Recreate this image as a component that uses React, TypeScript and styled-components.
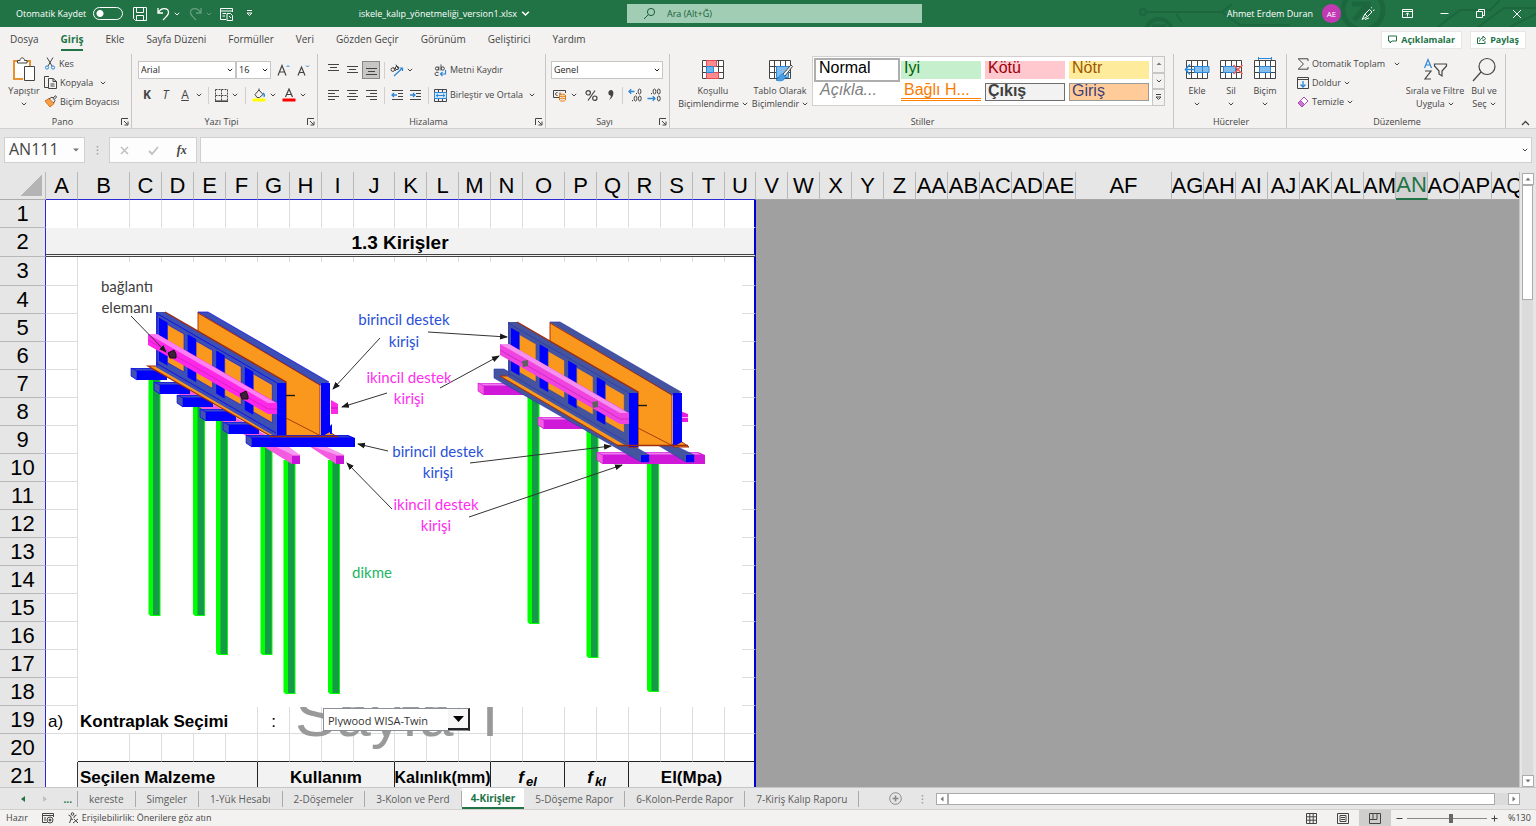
import React from "react";
import styled, { createGlobalStyle, css } from "styled-components";

const GREEN = "#217346";
const INK = "#444444";
const BLUE = "#2b88d8";
const PAGE_EDGE = "#2a2ad4";

const Global = createGlobalStyle`
  *, *::before, *::after { box-sizing: border-box; }
  html, body { margin: 0; padding: 0; }
  body { font-family: "Open Sans", "Noto Sans", sans-serif; font-size: 9px; line-height: 12px; color: ${INK}; }
  button, input, select { font: inherit; color: inherit; margin: 0; padding: 0; border: 0; background: none; border-radius: 0; outline: none; }
  button { display: flex; align-items: center; justify-content: center; white-space: nowrap; }
`;

const Shell = styled.div`
  display: flex;
  flex-direction: column;
  height: 100vh;
  overflow: hidden;
  background: #e6e6e6;
`;

const Icon = styled.svg.attrs((p) => ({ fill: "none", stroke: p.stroke ?? "currentColor" }))`
  display: block;
  flex: none;
`;

const Chevron = ({ size = 6 }: { size?: number }) => (
  <Icon width={size} height={size} viewBox="0 0 6 6" strokeWidth="1">
    <path d="M0.8 1.8 L3 4 L5.2 1.8" />
  </Icon>
);

/* Title bar */

const TitleBar = styled.header`
  position: relative;
  display: grid;
  grid-template-columns: 627fr 295px 614fr;
  align-items: center;
  height: 27px;
  flex: none;
  background: ${GREEN};
  color: #ffffff;
`;

const Circuit = styled.svg`
  position: absolute;
  right: 0;
  top: 0;
  fill: none;
  stroke: #1c673e;
`;

const QuickAccess = styled.div`
  display: flex;
  align-items: center;
  padding-left: 16px;
`;

const SwitchLabel = styled.label`
  display: flex;
  align-items: center;
  gap: 7px;
  white-space: nowrap;
`;

const Switch = styled.input`
  appearance: none;
  width: 30px;
  height: 13px;
  border: 1px solid #ffffff;
  border-radius: 7px;
  background: radial-gradient(circle at 6px 50%, #ffffff 3px, transparent 4px);
`;

const QuickButtons = styled.div`
  display: flex;
  align-items: center;
  gap: 6px;
  margin-left: 10px;
`;

const Quick = styled.button<{ $dim?: boolean; $ml?: number }>`
  gap: 4px;
  margin-left: ${(p) => p.$ml ?? 0}px;
  opacity: ${(p) => (p.$dim ? 0.3 : 1)};
`;

const FileName = styled.button`
  gap: 4px;
  margin: 0 97px 0 auto;
`;

const SearchBox = styled.label`
  display: flex;
  align-items: center;
  gap: 11px;
  height: 19px;
  padding-left: 16px;
  background: #a0cdb4;
  color: #1b5e38;
`;

const SearchInput = styled.input`
  flex: 1;
  min-width: 0;
  &::placeholder { color: #1b5e38; opacity: 1; }
`;

const Account = styled.div`
  position: relative;
  display: flex;
  align-items: center;
  justify-content: flex-end;
  padding-right: 14px;
  white-space: nowrap;
`;

const Avatar = styled.span`
  display: grid;
  place-items: center;
  width: 19px;
  height: 19px;
  margin: 0 20px 0 9px;
  border-radius: 50%;
  background: #c239b3;
  font-size: 8px;
`;

const WindowButtons = styled.div`
  display: flex;
  align-items: center;
  gap: 27px;
`;

/* Ribbon tabs */

const TabBar = styled.nav`
  display: flex;
  align-items: center;
  height: 25px;
  flex: none;
  padding: 0 10px;
  gap: 22px;
  background: #f3f2f1;
  font-size: 10px;
`;

const RibbonTab = styled.button<{ $active?: boolean }>`
  height: 22px;
  border-bottom: 2px solid transparent;
  ${(p) =>
    p.$active &&
    css`
      border-color: ${GREEN};
      color: ${GREEN};
      font-weight: 700;
    `}
`;

const ShareButtons = styled.div`
  display: flex;
  gap: 8px;
  margin-left: auto;
`;

const ShareButton = styled.button`
  gap: 4px;
  height: 18px;
  padding: 0 6px;
  background: #ffffff;
  border: 1px solid #e8e6e4;
  color: ${GREEN};
  font-size: 9px;
  font-weight: 700;
`;

/* Ribbon */

const Ribbon = styled.section`
  display: flex;
  height: 77px;
  flex: none;
  padding-top: 2px;
  background: #f3f2f1;
  border-bottom: 1px solid #d2d0ce;
`;

const GroupBox = styled.div<{ $w?: number; $pad?: number }>`
  display: flex;
  flex-direction: column;
  ${(p) => (p.$w ? `width: ${p.$w}px; flex: none;` : "flex: 1; min-width: 0;")}
  padding-left: ${(p) => p.$pad ?? 6}px;
  border-right: 1px solid #c8c6c4;
`;

const GroupBody = styled.div`
  display: flex;
  flex: none;
  height: 62px;
`;

const GroupFooter = styled.div<{ $pad: number }>`
  display: flex;
  align-items: center;
  height: 12px;
  margin-left: -${(p) => p.$pad}px;
  padding: 0 2px 0 4px;
`;

const GroupName = styled.span`
  flex: 1;
  text-align: center;
  font-size: 9px;
`;

const Launcher = () => (
  <Icon width="8" height="8" viewBox="0 0 8 8" strokeWidth="1">
    <path d="M0.5 7 V0.5 H7 M3 3 L6.5 6.5 M7 3.5 V7 H3.5" />
  </Icon>
);

type GroupProps = { name: string; w?: number; pad?: number; launcher?: boolean; children: React.ReactNode };

const Group = ({ name, w, pad = 6, launcher, children }: GroupProps) => (
  <GroupBox $w={w} $pad={pad}>
    <GroupBody>{children}</GroupBody>
    <GroupFooter $pad={pad}>
      <GroupName>{name}</GroupName>
      {launcher && <Launcher />}
    </GroupFooter>
  </GroupBox>
);

const Stack = styled.div<{ $gap?: number; $top?: number; $ml?: number }>`
  display: flex;
  flex-direction: column;
  gap: ${(p) => p.$gap ?? 0}px;
  padding-top: ${(p) => p.$top ?? 0}px;
  margin-left: ${(p) => p.$ml ?? 0}px;
`;

const ToolRow = styled.div`
  display: flex;
  align-items: center;
  height: 18px;
`;

const BigButton = styled.button<{ $w: number }>`
  flex-direction: column;
  justify-content: flex-start;
  width: ${(p) => p.$w}px;
  padding-top: 1px;
  line-height: 13px;
`;

const BigIcon = styled.span`
  display: grid;
  place-items: center;
  height: 29px;
`;

const BigLine = styled.span`
  display: flex;
  align-items: center;
  gap: 3px;
  height: 13px;
`;

const SmallButton = styled.button`
  justify-content: flex-start;
  gap: 3px;
  height: 19px;
`;

const SmallText = styled.span<{ $mr?: number }>`
  margin-right: ${(p) => p.$mr ?? 0}px;
`;

const Tool = styled.button<{ $w: number; $on?: boolean }>`
  width: ${(p) => p.$w}px;
  height: 18px;
  ${(p) => p.$on && "background: #c8c6c4; border: 1px solid #8a8886;"}
`;

const Letter = styled.span<{ $style?: string }>`
  font-size: 12px;
  line-height: 12px;
  font-weight: ${(p) => (p.$style === "bold" ? 700 : 400)};
  font-style: ${(p) => (p.$style === "italic" ? "italic" : "normal")};
  text-decoration: ${(p) => (p.$style === "underline" ? "underline" : "none")};
`;

const Rule = styled.span<{ $m?: number }>`
  width: 1px;
  height: 17px;
  margin: 0 ${(p) => p.$m ?? 4}px;
  background: #d2d0ce;
`;

const SelectBox = styled.span<{ $w: number }>`
  display: flex;
  align-items: center;
  width: ${(p) => p.$w}px;
  height: 18px;
  padding-right: 2px;
  border: 1px solid #c8c6c4;
  background: #ffffff;
  color: #252423;
`;

const RibbonSelect = styled.select`
  appearance: none;
  flex: 1;
  min-width: 0;
  height: 16px;
  padding-left: 2px;
`;

const Gallery = styled.div`
  display: flex;
  height: 50px;
  margin: 2px 0 0 1px;
  border: 1px solid #d2d0ce;
  background: #ffffff;
`;

const GalleryGrid = styled.div`
  display: grid;
  grid-template-columns: repeat(4, 80px);
  grid-auto-rows: 18px;
  gap: 4px;
  padding: 4px 3px 3px 4px;
`;

const StyleCell = styled.button<{ $bg?: string; $fg: string; $kind?: string }>`
  align-items: flex-start;
  justify-content: flex-start;
  padding-left: 3px;
  overflow: hidden;
  font-family: "Liberation Sans", Arial, sans-serif;
  font-size: 16px;
  line-height: 14px;
  background: ${(p) => p.$bg ?? "#ffffff"};
  color: ${(p) => p.$fg};
  ${(p) => p.$kind === "selected" && "outline: 2px solid #aeaeae; outline-offset: 1px; padding-left: 2px;"}
  ${(p) => p.$kind === "italic" && "font-style: italic;"}
  ${(p) => p.$kind === "linked" && "border-bottom: 3px double #ff8001;"}
  ${(p) => p.$kind === "output" && "border: 1px solid #6e6e6e; font-weight: 700; padding-left: 2px;"}
  ${(p) => p.$kind === "input" && "border: 1px solid #9a9a9a; padding-left: 2px;"}
`;

const GalleryScroll = styled.div`
  display: grid;
  grid-template-rows: 1fr 1fr 1fr;
  width: 13px;
  margin: -1px -1px -1px 0;
`;

const GalleryStep = styled.button`
  border: 1px solid #c8c6c4;
  background: #f3f2f1;
`;

const Collapse = styled.button`
  width: 30px;
  align-items: flex-end;
  padding: 0 0 2px 8px;
`;

/* Formula bar */

const FormulaRow = styled.div`
  display: flex;
  align-items: center;
  height: 43px;
  flex: none;
  padding: 0 4px 1px;
`;

const Field = styled.div<{ $w?: number; $ml?: number }>`
  display: flex;
  align-items: center;
  ${(p) => (p.$w ? `width: ${p.$w}px;` : "flex: 1;")}
  height: 26px;
  margin-left: ${(p) => p.$ml ?? 0}px;
  border: 1px solid #d0d0d0;
  background: #fdfdfd;
`;

const NameInput = styled.input`
  flex: 1;
  min-width: 0;
  height: 24px;
  padding: 0 0 2px 4px;
  font-size: 16px;
`;

const FormulaInput = styled.input`
  flex: 1;
  padding-left: 6px;
  font-size: 14px;
`;

const Fx = styled.span`
  font-family: "Liberation Serif", serif;
  font-style: italic;
  font-weight: 700;
  font-size: 12px;
`;

/* Sheet */

const SheetArea = styled.main`
  display: flex;
  flex: 1;
  min-height: 0;
`;

const Canvas = styled.div`
  position: relative;
  flex: 1;
  min-width: 0;
  overflow: hidden;
  background: #a0a0a0;
`;

const Grid = styled.table`
  table-layout: fixed;
  width: 1523px;
  border-collapse: separate;
  border-spacing: 0;
  font-family: "Liberation Sans", Arial, sans-serif;
  font-size: 17px;
  line-height: 22px;
  color: #000000;
  th, td { padding: 0; overflow: hidden; }
`;

const Row = styled.tr<{ $h: number }>`
  height: ${(p) => p.$h}px;
`;

const ColHead = styled.th<{ $page?: boolean; $active?: boolean }>`
  height: 28px;
  background: ${(p) => (p.$active ? "#d2d2d2" : "#e6e6e6")};
  border-right: 1px solid #b8b8b8;
  border-bottom: ${(p) => (p.$active ? `2px solid ${GREEN}` : p.$page ? `1px solid ${PAGE_EDGE}` : "1px solid #a6a6a6")};
  color: ${(p) => (p.$active ? GREEN : "#000000")};
  font-size: 22px;
  font-weight: 400;
`;

const Corner = styled.th`
  background: linear-gradient(135deg, transparent 50%, #b4b4b4 50%) 20px 3px / 22px 21px no-repeat #e6e6e6;
  border-right: 1px solid #b8b8b8;
  border-bottom: 1px solid #ababab;
`;

const RowHead = styled.th`
  background: #e6e6e6;
  border-right: 1px solid ${PAGE_EDGE};
  border-bottom: 1px solid #b8b8b8;
  font-size: 22px;
  font-weight: 400;
`;

const Cell = styled.td<{ $edge?: boolean; $kind?: string }>`
  vertical-align: bottom;
  background: #ffffff;
  border-right: 1px solid #dcdcdc;
  border-bottom: 1px solid #dcdcdc;
  ${(p) =>
    p.$kind === "title" &&
    "background: #f2f2f2; border-bottom: 3px double #444444; font-size: 19px; font-weight: 700; text-align: center;"}
  ${(p) => p.$kind === "nobottom" && "border-bottom-color: transparent;"}
  ${(p) => p.$kind === "side" && "border-right-color: #333333; border-bottom-color: #ffffff;"}
  ${(p) => p.$kind === "pretable" && "border-bottom-color: #222222;"}
  ${(p) => p.$kind === "head" && "background: #f2f2f2; border-right-color: #222222; font-weight: 700;"}
  ${(p) => p.$edge && "border-right: 2px solid #0000d0;"}
`;

const CellText = styled.div<{ $align?: string; $pad?: number; $small?: boolean }>`
  display: flex;
  justify-content: ${(p) => p.$align ?? "center"};
  padding-left: ${(p) => p.$pad ?? 0}px;
  font-size: ${(p) => (p.$small ? "16px" : "inherit")};
  white-space: nowrap;
`;

const Symbol = styled.em`
  font-size: 17px;
  sub { font-size: 13px; line-height: 0; margin-left: 2px; vertical-align: -3px; }
`;

const Outside = styled.td`
  background: #a0a0a0;
`;

const Watermark = styled.span`
  position: absolute;
  left: 295px;
  top: 507px;
  font-family: "Liberation Sans", Arial, sans-serif;
  font-size: 62px;
  line-height: 72px;
  color: #999999;
  white-space: nowrap;
`;

const WatermarkNumber = styled.span`
  font-family: Roboto, sans-serif;
`;

const Picture = styled.svg`
  position: absolute;
  left: 78px;
  top: 90px;
  background: #ffffff;
  font-family: Lato, "Open Sans", sans-serif;
  font-size: 15px;
`;

const Combo = styled.label`
  position: absolute;
  left: 323px;
  top: 536px;
  display: flex;
  width: 147px;
  height: 23px;
  border: 1px solid #8a8f98;
  border-right: 2px solid #222222;
  background: #ffffff;
`;

const ComboSelect = styled.select`
  appearance: none;
  flex: 1;
  min-width: 0;
  padding: 2px 0 0 4px;
  font-size: 11px;
  color: #333333;
`;

const ComboArrow = styled.span`
  display: grid;
  place-items: center;
  width: 20px;
  border-bottom: 2px solid #222222;
  background: #f6f6f6;
`;

const VScroll = styled.div`
  display: flex;
  flex-direction: column;
  width: 17px;
  padding: 1px 3px 0 2px;
  border-left: 1px solid #c6c6c6;
`;

const Step = styled.button`
  flex: none;
  width: 12px;
  height: 12px;
  border: 1px solid #ababab;
  background: #ffffff;
`;

const VThumb = styled.div`
  height: 115px;
  border: 1px solid #ababab;
  background: #ffffff;
`;

const Track = styled.div`
  flex: 1;
  background: #dbdbdb;
`;

/* Sheet tabs */

const SheetBar = styled.nav`
  display: flex;
  align-items: center;
  height: 23px;
  flex: none;
  border-top: 1px solid #c6c6c6;
  border-bottom: 1px solid #d2d0ce;
  font-size: 10px;
`;

const SheetNav = styled.div`
  display: flex;
  align-items: center;
  justify-content: space-between;
  width: 78px;
  height: 16px;
  padding: 0 5px 0 20px;
  border-right: 1px solid #ababab;
  color: ${GREEN};
`;

const SheetTab = styled.button<{ $active?: boolean }>`
  height: 16px;
  padding: 0 11px;
  border-right: 1px solid #ababab;
  color: #5c5c5c;
  ${(p) =>
    p.$active &&
    css`
      height: 21px;
      padding: 0 9px;
      border-right: 0;
      border-bottom: 2px solid ${GREEN};
      background: #ffffff;
      color: ${GREEN};
      font-weight: 700;
    `}
`;

const AddSheet = styled.button`
  margin-left: 30px;
  color: #8a8886;
`;

const HScroll = styled.div`
  display: flex;
  flex: 1;
  max-width: 600px;
  margin: 0 16px 0 auto;
`;

const HThumb = styled.div`
  flex: 1;
  height: 12px;
  border: 1px solid #ababab;
  background: #ffffff;
`;

const HGap = styled.div`
  width: 13px;
  background: #dbdbdb;
`;

/* Status bar */

const StatusBar = styled.footer`
  display: flex;
  align-items: center;
  height: 16px;
  flex: none;
  padding: 0 6px;
  background: #f3f2f1;
`;

const StatusItem = styled.span`
  display: flex;
  align-items: center;
  gap: 3px;
  margin-right: 14px;
`;

const StatusTools = styled.div`
  display: flex;
  align-items: center;
  margin-left: auto;
`;

const ViewButton = styled.button<{ $on?: boolean }>`
  width: 32px;
  height: 16px;
  background: ${(p) => (p.$on ? "#d0cecc" : "none")};
`;

const Zoom = styled.input`
  appearance: none;
  width: 80px;
  height: 12px;
  margin: 0 4px;
  background: linear-gradient(#8a8886, #8a8886) center / 100% 1px no-repeat;
  &::-webkit-slider-thumb {
    appearance: none;
    width: 4px;
    height: 9px;
    background: #666666;
  }
`;

const Percent = styled.span`
  width: 22px;
  margin-left: 10px;
`;

/* Drawn icons */

const AlignIcon = ({ rows }: { rows: [number, number][] }) => (
  <Icon width="13" height="13" viewBox="0 0 13 13" strokeWidth="1">
    {rows.map(([x1, x2], i) => (
      <path key={i} d={`M${x1} ${i * 3 + 1.5} H${x2}`} />
    ))}
  </Icon>
);

const VAlignIcon = ({ y }: { y: number }) => (
  <Icon width="13" height="14" viewBox="0 0 13 14" strokeWidth="1">
    <path d={`M1 ${y + 0.5} H12 M3 ${y + 3.5} H10 M1 ${y + 6.5} H12`} />
  </Icon>
);

const IndentIcon = ({ out }: { out?: boolean }) => (
  <Icon width="13" height="12" viewBox="0 0 13 12" strokeWidth="1">
    <path d="M1 1.5 H12 M7 4.5 H12 M7 7.5 H12 M1 10.5 H12" />
    <path stroke={BLUE} strokeWidth="1.3" d={out ? "M6 6 H1 M3 4 L1 6 L3 8" : "M1 6 H6 M4 4 L6 6 L4 8"} />
  </Icon>
);

const DecimalIcon = ({ more }: { more?: boolean }) => (
  <Icon width="14" height="14" viewBox="0 0 14 14" strokeWidth="1">
    {more ? (
      <>
        <ellipse cx="11.5" cy="3.5" rx="1.4" ry="2.5" />
        <ellipse cx="7.5" cy="10.5" rx="1.4" ry="2.5" />
        <ellipse cx="11.8" cy="10.5" rx="1.4" ry="2.5" />
        <path d="M8.5 5 v1.2 M4.5 12 v1.2" />
        <path stroke={BLUE} strokeWidth="1.3" d="M6.5 3.5 H1 M3.2 1.2 L1 3.5 L3.2 5.8" />
      </>
    ) : (
      <>
        <ellipse cx="7.5" cy="3.5" rx="1.4" ry="2.5" />
        <ellipse cx="11.8" cy="3.5" rx="1.4" ry="2.5" />
        <ellipse cx="11.8" cy="10.5" rx="1.4" ry="2.5" />
        <path d="M4.5 5 v1.2" />
        <path stroke={BLUE} strokeWidth="1.3" d="M0.5 10.5 H8 M5.8 8.2 L8 10.5 L5.8 12.8" />
      </>
    )}
  </Icon>
);

const TableIcon = ({ kind }: { kind: "cond" | "format" | "insert" | "delete" | "cell" }) => (
  <Icon width="26" height="26" viewBox="0 0 26 26" strokeWidth="1">
    <path d="M2.5 3.5 H23.5 V21.5 H2.5 Z" fill="#ffffff" />
    <path d="M7.5 3.5 V21.5 M13.5 3.5 V21.5 M18.5 3.5 V21.5 M2.5 9.5 H23.5 M2.5 15.5 H23.5" />
    {kind === "cond" && (
      <g stroke="#e04a50">
        <path d="M6.5 3.5 H16.5 V9.5 H6.5 Z M6.5 15.5 H18.5 V21.5 H6.5 Z" fill="#ff8a90" />
        <path d="M6.5 9.5 H13.5 V15.5 H6.5 Z" fill="#6db3ec" stroke={BLUE} />
      </g>
    )}
    {kind === "format" && (
      <g>
        <path d="M9.5 9.5 H21.5 V20.5 H9.5 Z" fill="#83bdee" stroke={BLUE} />
        <path d="M24 8 L16 17 L18 19 L25.5 9.5 Z" fill="#f3f2f1" />
        <path d="M16 17 C12 17 13 21 9 23 C14 25 19 23 18 19 Z" fill="#4a9de0" stroke={BLUE} />
      </g>
    )}
    {kind === "insert" && (
      <g stroke={BLUE}>
        <path d="M10.5 9.5 H25 V15.5 H10.5 Z M18.5 9.5 V15.5" fill="#83bdee" />
        <path d="M11 12.5 H2 M6 7.5 L1.5 12.5 L6 17.5" strokeWidth="1.6" />
      </g>
    )}
    {kind === "delete" && (
      <g>
        <path d="M5.5 9.5 H17.5 V15.5 H5.5 Z" fill="#83bdee" stroke={BLUE} />
        <path d="M15.5 8 L24.5 17 M24.5 8 L15.5 17" stroke="#f0605a" strokeWidth="1.6" />
      </g>
    )}
    {kind === "cell" && (
      <g stroke={BLUE}>
        <path d="M7.5 9.5 H18.5 V15.5 H7.5 Z" fill="#83bdee" />
        <path d="M6.5 1.5 H19.5 M6.5 0 V3 M19.5 0 V3" />
      </g>
    )}
  </Icon>
);

/* Formwork drawing */

type PostProps = { x: number; top: number; bottom: number };
const Post = ({ x, top, bottom }: PostProps) => (
  <g>
    <path d={`M${x} ${top} H${x + 12} V${bottom} H${x + 2} L${x} ${bottom - 2} Z`} fill="#00ff00" />
    <path d={`M${x + 4.5} ${top} H${x + 11} V${bottom - 1} H${x + 4.5} Z`} fill="#159a48" />
  </g>
);

type BeamProps = { x: number; y: number; w: number; face: string; end: string; top: string };
const Beam = ({ x, y, w, face, end, top }: BeamProps) => (
  <g>
    <path d={`M${x} ${y} H${x + w - 7} L${x + w} ${y + 3} V${y + 12} H${x + 6} L${x} ${y + 8} Z`} fill={face} />
    <path d={`M${x} ${y} L${x + 6} ${y + 3} V${y + 12} L${x} ${y + 8} Z`} fill={end} stroke={face} strokeWidth="0.6" />
    <path d={`M${x + 1} ${y + 0.6} H${x + w - 8} L${x + w - 4} ${y + 2.6} H${x + 6} Z`} fill={top} />
  </g>
);

const SLOPE = 0.574;

type WallProps = { x: number; y: number; frame: string; line: string; waler: string; lit: string };
const Wall = ({ x, y, frame, line, waler, lit }: WallProps) => {
  const at = (dx: number, base: number) => y + base + dx * SLOPE;
  return (
    <g>
      <path d={`M${x + 42} ${y} L${x + 164} ${y + 71} V${y + 124} H${x + 128} L${x + 42} ${y + 80} Z`} fill="#fa981e" />
      <path d={`M${x + 42} ${y} V${y + 30} M${x + 130} ${y + 106} L${x + 165} ${y + 124}`} stroke="#b03a08" />
      <path d={`M${x + 42} ${y} H${x + 52} L${x + 173} ${y + 70} L${x + 164} ${y + 73} Z`} fill={frame} stroke={line} strokeWidth="0.7" />
      <path d={`M${x + 42} ${y + 1} L${x + 164} ${y + 73} V${y + 124}`} fill="none" stroke="#a02c0c" />
      <rect x={x + 165} y={y + 71} width="9" height="54" fill="#0000ff" />
      <path d={`M${x + 174} ${y + 120} L${x + 181} ${y + 125} H${x + 165}`} fill="#fa981e" stroke="#a02c0c" />
      <path d={`M${x} ${y} H${x + 9} L${x + 130} ${y + 70} V${y + 125} H${x + 120} L${x} ${y + 55} Z`} fill={frame} />
      <path d={`M${x + 9} ${y} L${x + 130} ${y + 70} V${y + 125} H${x + 120}`} fill="none" stroke="#a02c0c" strokeWidth="1.4" />
      {[0, 1, 2, 3].map((i) => {
        const px = 3 + i * 28.6;
        const ox = px + 8.5;
        const w = i === 3 ? 19 : 16.5;
        return (
          <g key={i}>
            <path d={`M${x + px} ${at(px, 4)} L${x + ox} ${at(ox, 4)} V${at(ox, 47)} L${x + px} ${at(px, 47)} Z`} fill="#0000ff" />
            <path d={`M${x + ox} ${at(ox, 6)} L${x + ox + w} ${at(ox + w, 6)} V${at(ox + w, 44)} L${x + ox} ${at(ox, 44)} Z`} fill="#fa981e" stroke={line} strokeWidth="0.6" />
          </g>
        );
      })}
      <path
        d={`M${x} ${y + 1} L${x + 121} ${y + 71} M${x} ${y + 51} L${x + 120} ${y + 121} M${x + 1} ${y} V${y + 54}`}
        stroke={line}
        strokeWidth="1"
      />
      <rect x={x + 121} y={y + 71} width="9" height="54" fill="#0000ff" />
      <path d={`M${x - 8} ${y + 22} H${x + 1} L${x + 121} ${y + 91} V${y + 102} H${x + 112} L${x - 8} ${y + 33} Z`} fill={waler} />
      <path d={`M${x - 8} ${y + 22} H${x + 1} L${x + 120} ${y + 91} H${x + 112} Z`} fill={lit} />
      <path d={`M${x - 8} ${y + 28} L${x + 112} ${y + 97} H${x + 121}`} stroke="#b818b8" strokeWidth="0.6" fill="none" />
      <path d={`M${x + 130} ${y + 83.5} H${x + 139}`} stroke="#1a1a1a" strokeWidth="1.4" />
    </g>
  );
};

const ARROWS = [
  [131, 316, 166, 352],
  [380, 338, 333, 389],
  [428, 332, 507, 337],
  [387, 393, 342, 407],
  [440, 388, 499, 356],
  [388, 451, 358, 444],
  [470, 463, 611, 446],
  [392, 509, 347, 463],
  [469, 517, 622, 465],
];

const NOTES: [number, number, string, string][] = [
  [127, 292, "bağlantı", "#404040"],
  [127, 313, "elemanı", "#404040"],
  [404, 325, "birincil destek", "#2a50d8"],
  [404, 347, "kirişi", "#2a50d8"],
  [409, 383, "ikincil destek", "#ff2df0"],
  [409, 404, "kirişi", "#ff2df0"],
  [438, 457, "birincil destek", "#2a50d8"],
  [438, 478, "kirişi", "#2a50d8"],
  [436, 510, "ikincil destek", "#ff2df0"],
  [436, 531, "kirişi", "#ff2df0"],
  [372, 578, "dikme", "#22b566"],
];

const LEFT_BEAMS = [
  [131, 368, 36],
  [154, 382, 36],
  [177, 395, 36],
  [200, 409, 36],
  [223, 422, 36],
];

const Formwork = () => (
  <Picture width="664" height="445" viewBox="78 262 664 445" role="img" aria-label="Kiriş kalıbı">
    <defs>
      <marker id="tip" viewBox="0 0 8 8" refX="7" refY="4" markerWidth="8" markerHeight="8" orient="auto">
        <path d="M0 1 L8 4 L0 7 Z" fill="#1a1a1a" />
      </marker>
    </defs>

    <Post x={148.5} top={378} bottom={616} />
    <Post x={193} top={402} bottom={616} />
    <Post x={216} top={418} bottom={655} />
    <Post x={260.5} top={444} bottom={655} />
    <Post x={283.5} top={460} bottom={694} />
    <Post x={328} top={460} bottom={694} />
    <path d="M165 386 L182 386 L300 455 V464 H292 Z" fill="#f45be0" />
    <path d="M300 440 L318 443 L344 455 V464 H336 Z" fill="#f45be0" />
    <path d="M262 440 H280 L300 455 H293 Z M305 444 H320 L344 455 H337 Z" fill="#f49af0" />
    <path d="M292 456 H300 V464 H292 Z M336 456 H344 V464 H336 Z" fill="#c814d8" />
    {LEFT_BEAMS.map(([x, y, w]) => (
      <Beam key={x} x={x} y={y} w={w} face="#0000ff" end="#4452b0" top="#3a4cc0" />
    ))}
    <path d="M331 400 L338 404 V414 H331 Z" fill="#ff28e8" />
    <path d="M331 408 H338" stroke="#b818b8" />
    <path d="M148 366 H156 L286 437 H272 Z" fill="#fa981e" stroke="#a02c0c" strokeWidth="1.2" />
    <Wall x={156} y={312} frame="#3c4fb4" line="#1410e8" waler="#ff28e8" lit="#ff80f4" />
    <path d="M330 426 L332 424 V434 H330 Z" fill="#0000ff" />
    <Beam x={246} y={435} w={109} face="#0000ff" end="#4452b0" top="#2c3cc4" />
    <path d="M270 436.5 H338" stroke="#a02c0c" strokeWidth="1.4" />
    <path d="M168 353 L174 350 L176 354 V358 H170 Z M240 394 L246 391 L248 396 V399 H242 Z" fill="#3a2038" stroke="#111111" />

    <Post x={527.5} top={392} bottom={624} />
    <Post x={586.5} top={428} bottom={658} />
    <Post x={647} top={462} bottom={692} />
    <Beam x={478} y={383} w={52} face="#d018d8" end="#f45be0" top="#ee7cee" />
    <Beam x={538} y={417} w={54} face="#d018d8" end="#f45be0" top="#ee7cee" />
    <Beam x={597} y={452} w={108} face="#d018d8" end="#f45be0" top="#ee7cee" />
    <path d="M656 444 H672 L694 455 V462 H686 Z M494 369 H504 L649 455 V462 H641 L494 378 Z" fill="#44549e" stroke="#2636b8" strokeWidth="0.6" />
    <path d="M641 455 H649 V462 H641 Z M686 455 H694 V462 H686 Z" fill="#0000ff" />
    <path d="M680 411 L688 414 V422 H680 Z" fill="#e81cdc" />
    <path d="M680 417.5 H688" stroke="#ffb0f8" />
    <path d="M500 376 H508 L637 445.5 H618 Z" fill="#fa981e" stroke="#a02c0c" />
    <Wall x={508} y={322} frame="#44549e" line="#3040a8" waler="#f044e0" lit="#f490f0" />
    <path d="M617 445.5 H688" stroke="#a02c0c" strokeWidth="1.4" />
    <path d="M522 361 L528 360 V366 L523 367 Z M592 402 L598 401 V407 L593 408 Z" fill="#606060" />

    {ARROWS.map(([x1, y1, x2, y2]) => (
      <line key={`${x1}-${y1}`} x1={x1} y1={y1} x2={x2} y2={y2} stroke="#333333" strokeWidth="1" markerEnd="url(#tip)" />
    ))}
    {NOTES.map(([x, y, text, fill]) => (
      <text key={`${x}-${y}`} x={x} y={y} fill={fill} textAnchor="middle">
        {text}
      </text>
    ))}
  </Picture>
);

/* Data */

const PAGE_COLS: [string, number][] = [
  ["A", 32], ["B", 52], ["C", 32], ["D", 32], ["E", 32], ["F", 32], ["G", 32], ["H", 32], ["I", 32], ["J", 41],
  ["K", 32], ["L", 32], ["M", 32], ["N", 32], ["O", 42], ["P", 32], ["Q", 32], ["R", 32], ["S", 32], ["T", 32], ["U", 31],
];
const REST_COLS: [string, number][] = [
  ["V", 32], ["W", 32], ["X", 32], ["Y", 32], ["Z", 32], ["AA", 32], ["AB", 32], ["AC", 32], ["AD", 32], ["AE", 32],
  ["AF", 96], ["AG", 32], ["AH", 32], ["AI", 32], ["AJ", 32], ["AK", 32], ["AL", 32], ["AM", 32], ["AN", 32],
  ["AO", 32], ["AP", 32], ["AQ", 32],
];
const RIBBON_TABS = ["Dosya", "Giriş", "Ekle", "Sayfa Düzeni", "Formüller", "Veri", "Gözden Geçir", "Görünüm", "Geliştirici", "Yardım"];
const SHEETS = ["kereste", "Simgeler", "1-Yük Hesabı", "2-Döşemeler", "3-Kolon ve Perd", "4-Kirişler", "5-Döşeme Rapor", "6-Kolon-Perde Rapor", "7-Kiriş Kalıp Raporu"];

const emptyCells = (from: number, kind?: string) =>
  PAGE_COLS.slice(from).map(([name]) => <Cell key={name} $kind={kind} $edge={name === "U"} />);

const sheetRow = (n: number) => {
  if (n === 2) return <Cell colSpan={21} $kind="title" $edge>1.3 Kirişler</Cell>;
  if (n === 19)
    return (
      <>
        <Cell><CellText $align="flex-start" $pad={2}>a)</CellText></Cell>
        <Cell colSpan={5}><CellText $align="flex-start" $pad={2}><b>Kontraplak Seçimi</b></CellText></Cell>
        <Cell><CellText>:</CellText></Cell>
        {emptyCells(7)}
      </>
    );
  if (n === 20)
    return (
      <>
        <Cell $kind="nobottom" />
        {emptyCells(1, "pretable")}
      </>
    );
  if (n === 21)
    return (
      <>
        <Cell $kind="side" />
        <Cell colSpan={5} $kind="head"><CellText $align="flex-start" $pad={2}>Seçilen Malzeme</CellText></Cell>
        <Cell colSpan={4} $kind="head"><CellText>Kullanım</CellText></Cell>
        <Cell colSpan={3} $kind="head"><CellText $small>Kalınlık(mm)</CellText></Cell>
        <Cell colSpan={2} $kind="head"><CellText><Symbol>f<sub>el</sub></Symbol></CellText></Cell>
        <Cell colSpan={2} $kind="head"><CellText><Symbol>f<sub>kl</sub></Symbol></CellText></Cell>
        <Cell colSpan={4} $kind="head" $edge><CellText>El(Mpa)</CellText></Cell>
      </>
    );
  return emptyCells(0, n === 1 ? "nobottom" : undefined);
};

const rowHeight = (n: number) => (n === 2 || n === 3 ? 29 : 28);

const Sheet = () => (
  <Canvas>
    <Grid>
      <colgroup>
        <col width={46} />
        {[...PAGE_COLS, ...REST_COLS].map(([name, w]) => (
          <col key={name} width={w} />
        ))}
      </colgroup>
      <thead>
        <Row $h={28}>
          <Corner />
          {PAGE_COLS.map(([name]) => (
            <ColHead key={name} $page><CellText>{name}</CellText></ColHead>
          ))}
          {REST_COLS.map(([name]) => (
            <ColHead key={name} $active={name === "AN"}><CellText>{name}</CellText></ColHead>
          ))}
        </Row>
      </thead>
      <tbody>
        {Array.from({ length: 21 }, (_, i) => i + 1).map((n) => (
          <Row key={n} $h={rowHeight(n)}>
            <RowHead>{n}</RowHead>
            {sheetRow(n)}
            {n === 1 && <Outside rowSpan={21} colSpan={REST_COLS.length} />}
          </Row>
        ))}
      </tbody>
    </Grid>
    <Watermark>Sayfa <WatermarkNumber>1</WatermarkNumber></Watermark>
    <Formwork />
    <Combo>
      <ComboSelect aria-label="Kontraplak Seçimi">
        <option>Plywood WISA-Twin</option>
      </ComboSelect>
      <ComboArrow>
        <Icon width="11" height="6" viewBox="0 0 11 6" stroke="none"><path d="M0 0 H11 L5.5 6 Z" fill="#000000" /></Icon>
      </ComboArrow>
    </Combo>
  </Canvas>
);

const Arrow = ({ d }: { d: string }) => (
  <Icon width="6" height="6" viewBox="0 0 6 6"><path d={d} fill="#777777" stroke="none" /></Icon>
);

export default function App() {
  return (
    <Shell>
      <Global />
      <TitleBar>
        <Circuit width="400" height="27" viewBox="1136 0 400 27" strokeWidth="3">
          <circle cx="1143" cy="12" r="3" strokeWidth="2" />
          <path d="M1147 12 H1222 L1232 4 M1182 22 L1176 14 M1290 25 H1240 L1222 12 M1438 27 L1460 10 H1490 L1500 0 M1478 27 L1504 8 H1536 M1510 27 L1536 14" strokeWidth="2" />
          <circle cx="1159" cy="32" r="13" strokeWidth="4" />
          <path d="M1152 26 H1166" />
          <circle cx="1363" cy="10" r="20" strokeWidth="5" />
          <path d="M1352 4 H1368 V16 M1368 4 L1354 20" strokeWidth="5" />
        </Circuit>
        <QuickAccess>
          <SwitchLabel>
            Otomatik Kaydet
            <Switch type="checkbox" />
          </SwitchLabel>
          <QuickButtons>
            <Quick aria-label="Kaydet">
              <Icon width="14" height="14" viewBox="0 0 14 14"><path d="M0.5 0.5 H13.5 V13.5 H2.5 L0.5 11.5 Z M3.5 0.5 V5.5 H10.5 V0.5 M3.5 13.5 V8.5 H10.5 V13.5" /></Icon>
            </Quick>
            <Quick aria-label="Geri Al" $ml={4}>
              <Icon width="13" height="14" viewBox="0 0 13 14" strokeWidth="1.3"><path d="M1 1 V6 H6 M1.5 5.5 C4 0.5 11 0.5 11.5 5 C12 8 9 9.5 6 13" /></Icon>
              <Chevron />
            </Quick>
            <Quick aria-label="Yinele" $dim $ml={3}>
              <Icon width="13" height="14" viewBox="0 0 13 14" strokeWidth="1.3"><path d="M12 1 V6 H7 M11.5 5.5 C9 0.5 2 0.5 1.5 5 C1 8 4 9.5 7 13" /></Icon>
              <Chevron />
            </Quick>
            <Quick aria-label="Form" $ml={2}>
              <Icon width="14" height="14" viewBox="0 0 14 14"><path d="M6 12.5 H0.5 V1.5 H12.5 V5 M0.5 4 H12.5 M2.5 6.5 H6 M2.5 9 H5 M7 6.5 H10.5 L12.5 8.5 V13.5 H7 Z M9 9 L11 11" /></Icon>
            </Quick>
            <Quick aria-label="Özelleştir" $ml={6}>
              <Icon width="7" height="7" viewBox="0 0 7 7"><path d="M1 0.5 H6 M1 3 L3.5 5.5 L6 3 Z" /></Icon>
            </Quick>
          </QuickButtons>
          <FileName>
            iskele_kalıp_yönetmeliği_version1.xlsx
            <Chevron size={9} />
          </FileName>
        </QuickAccess>
        <SearchBox>
          <Icon width="13" height="13" viewBox="0 0 13 13"><circle cx="8" cy="5" r="3.6" /><path d="M5.4 7.6 L1 12" /></Icon>
          <SearchInput aria-label="Ara" placeholder="Ara (Alt+Ğ)" />
        </SearchBox>
        <Account>
          Ahmet Erdem Duran
          <Avatar>AE</Avatar>
          <WindowButtons>
            <Quick aria-label="Kalem">
              <Icon width="14" height="14" viewBox="0 0 14 14"><path d="M1 12.5 L4 7 L8.5 2.5 L11 5 L6.5 9.5 L1 12.5 M4 7 L6.5 9.5 M10 1 L11 0.5 M12 3.5 L13.5 3 M4 12.5 L8 11" /></Icon>
            </Quick>
            <Quick aria-label="Şerit">
              <Icon width="11" height="9" viewBox="0 0 11 9"><path d="M0.5 0.5 H10.5 V8.5 H0.5 Z M0.5 2.5 H10.5 M5.5 7.5 V4 M3.8 5.5 L5.5 3.8 L7.2 5.5" /></Icon>
            </Quick>
            <Quick aria-label="Küçült">
              <Icon width="9" height="9" viewBox="0 0 9 9"><path d="M0.5 4.5 H8.5" /></Icon>
            </Quick>
            <Quick aria-label="Geri Yükle">
              <Icon width="9" height="9" viewBox="0 0 9 9"><path d="M0.5 2.5 H6.5 V8.5 H0.5 Z M2.5 2.5 V0.5 H8.5 V6.5 H6.5" /></Icon>
            </Quick>
            <Quick aria-label="Kapat">
              <Icon width="10" height="10" viewBox="0 0 10 10"><path d="M1 1 L9 9 M9 1 L1 9" /></Icon>
            </Quick>
          </WindowButtons>
        </Account>
      </TitleBar>

      <TabBar>
        {RIBBON_TABS.map((t) => (
          <RibbonTab key={t} $active={t === "Giriş"}>{t}</RibbonTab>
        ))}
        <ShareButtons>
          <ShareButton>
            <Icon width="9" height="9" viewBox="0 0 9 9"><path d="M0.5 1 H8.5 V6 H4 L2 8 V6 H0.5 Z" /></Icon>
            Açıklamalar
          </ShareButton>
          <ShareButton>
            <Icon width="9" height="9" viewBox="0 0 9 9"><path d="M3 3 H0.5 V8.5 H8 V6 M2.5 6.5 C3 4 4.5 3 6 3 V1 L8.7 3.7 L6 6 V4.5" /></Icon>
            Paylaş
          </ShareButton>
        </ShareButtons>
      </TabBar>

      <Ribbon>
        <Group name="Pano" w={132} launcher>
          <BigButton $w={36}>
            <BigIcon>
              <Icon width="24" height="26" viewBox="0 0 24 26">
                <path d="M8 4 H2 V22 H11 M14 4 H18 V9" stroke="#e8912d" strokeWidth="2" />
                <path d="M3 5 H17 V21 H3 Z" fill="#ffffff" stroke="none" />
                <path d="M5.5 6 V3.5 H8 C8 0 12.5 0 12.5 3.5 H15 V6 Z M12.5 9.5 H22.5 V23.5 H12.5 Z" fill="#ffffff" />
              </Icon>
            </BigIcon>
            <BigLine>Yapıştır</BigLine>
            <BigLine><Chevron /></BigLine>
          </BigButton>
          <Stack $ml={2}>
            <SmallButton>
              <Icon width="12" height="13" viewBox="0 0 12 13"><path d="M3 0.5 L8 9 M9 0.5 L4 9" /><circle cx="3" cy="10.5" r="1.6" stroke={BLUE} /><circle cx="9" cy="10.5" r="1.6" stroke={BLUE} /></Icon>
              Kes
            </SmallButton>
            <SmallButton>
              <Icon width="13" height="13" viewBox="0 0 13 13"><path d="M4 11.5 H0.5 V0.5 H5 M4.5 2.5 H9 L12.5 5.5 V12.5 H4.5 Z M9 2.5 V5.5 H12.5 M6.5 8 H10.5 M6.5 10 H10.5" /></Icon>
              <SmallText $mr={4}>Kopyala</SmallText>
              <Chevron />
            </SmallButton>
            <SmallButton>
              <Icon width="13" height="13" viewBox="0 0 13 13"><path d="M1 6 L5 3.5 L10 8.5 L6 12 Z" fill="#f4a04a" stroke="#d8700e" /><path d="M5 4 L8 2 L11 5.5 L9.5 8 M9 3 L11.5 0.7 L12.5 2 L10.5 4.3" /></Icon>
              Biçim Boyacısı
            </SmallButton>
          </Stack>
        </Group>

        <Group name="Yazı Tipi" w={186} launcher>
          <Stack $top={7} $gap={7}>
            <ToolRow>
              <SelectBox $w={98}>
                <RibbonSelect aria-label="Yazı Tipi"><option>Arial</option></RibbonSelect>
                <Chevron />
              </SelectBox>
              <SelectBox $w={35}>
                <RibbonSelect aria-label="Boyut"><option>16</option></RibbonSelect>
                <Chevron />
              </SelectBox>
              <Tool $w={24} aria-label="Büyüt">
                <Icon width="13" height="13" viewBox="0 0 13 13"><path d="M1 11.5 L5 1.5 L9 11.5 M2.5 8 H7.5" strokeWidth="1.2" /><path d="M9.5 3 L11 1.5 L12.5 3" stroke={BLUE} /></Icon>
              </Tool>
              <Tool $w={16} aria-label="Küçült">
                <Icon width="13" height="13" viewBox="0 0 13 13"><path d="M1 11.5 L4.5 3 L8 11.5 M2.3 8.5 H6.7" strokeWidth="1.2" /><path d="M9 1.5 L10.5 3 L12 1.5" stroke={BLUE} /></Icon>
              </Tool>
            </ToolRow>
            <ToolRow>
              <Tool $w={18}><Letter $style="bold">K</Letter></Tool>
              <Tool $w={19}><Letter $style="italic">T</Letter></Tool>
              <Tool $w={20}><Letter $style="underline">A</Letter></Tool>
              <Tool $w={8} aria-label="Altı çizili türü"><Chevron /></Tool>
              <Rule $m={5} />
              <Tool $w={14} aria-label="Kenarlıklar">
                <Icon width="13" height="13" viewBox="0 0 13 13"><path d="M0.5 0.5 H12.5 M0.5 0.5 V12 M12.5 0.5 V12 M6.5 0.5 V12 M0.5 6.5 H12.5" strokeDasharray="2 1" /><path d="M0 12.2 H13" strokeWidth="1.6" /></Icon>
              </Tool>
              <Tool $w={13} aria-label="Kenarlık türü"><Chevron /></Tool>
              <Rule $m={4} />
              <Tool $w={17} aria-label="Dolgu">
                <Icon width="14" height="14" viewBox="0 0 14 14"><path d="M3 6.5 L7 2 L11 6.5 L7.5 9.5 H5 Z M7 2 V0.5" /><path d="M11 5 C13 7 12.5 8.5 11.5 8.5" stroke={BLUE} strokeWidth="1.6" /><path d="M0.5 12 H13.5" stroke="#ffff00" strokeWidth="3" /></Icon>
              </Tool>
              <Tool $w={12} aria-label="Dolgu rengi"><Chevron /></Tool>
              <Tool $w={20} aria-label="Yazı rengi">
                <Icon width="14" height="14" viewBox="0 0 14 14"><path d="M3.5 9 L7 1 L10.5 9 M4.6 6.5 H9.4" strokeWidth="1.2" /><path d="M0.5 12 H13.5" stroke="#ff0000" strokeWidth="3" /></Icon>
              </Tool>
              <Tool $w={8} aria-label="Renkler"><Chevron /></Tool>
            </ToolRow>
          </Stack>
        </Group>

        <Group name="Hizalama" w={228} launcher>
          <Stack $top={7} $gap={7}>
            <ToolRow>
              <Tool $w={18} aria-label="Üste"><VAlignIcon y={1} /></Tool>
              <Tool $w={20} aria-label="Ortaya"><VAlignIcon y={3} /></Tool>
              <Tool $w={18} $on aria-label="Alta"><VAlignIcon y={5} /></Tool>
              <Rule $m={4} />
              <Tool $w={16} aria-label="Yönlendirme">
                <Icon width="14" height="13" viewBox="0 0 14 13"><circle cx="2.8" cy="5.6" r="1.8" /><path d="M3.6 3.4 L5.6 7 M6 0.6 L8 4.6" /><circle cx="7" cy="4" r="1.7" /><path d="M4 12 L12.5 4 M9.5 4 H12.5 V7" stroke={BLUE} strokeWidth="1.2" /></Icon>
              </Tool>
              <Tool $w={10} aria-label="Yön"><Chevron /></Tool>
            </ToolRow>
            <ToolRow>
              <Tool $w={18} aria-label="Sola"><AlignIcon rows={[[1, 12], [1, 8], [1, 12], [1, 8]]} /></Tool>
              <Tool $w={20} aria-label="Ortala"><AlignIcon rows={[[1, 12], [3, 10], [1, 12], [3, 10]]} /></Tool>
              <Tool $w={18} aria-label="Sağa"><AlignIcon rows={[[1, 12], [5, 12], [1, 12], [5, 12]]} /></Tool>
              <Rule $m={4} />
              <Tool $w={16} aria-label="Girintiyi azalt"><IndentIcon out /></Tool>
              <Tool $w={20} aria-label="Girintiyi artır"><IndentIcon /></Tool>
              <Rule $m={3} />
            </ToolRow>
          </Stack>
          <Stack $top={7} $gap={7} $ml={2}>
            <ToolRow>
              <SmallButton>
                <Icon width="13" height="13" viewBox="0 0 13 13"><circle cx="3" cy="4.5" r="1.6" /><path d="M4.8 2.5 V6.5 M7 0.5 V6.5 M4.5 8.5 C2 7.5 1 9 1 10 C1 11.5 2.5 12 4.5 11.2" /><circle cx="8.8" cy="4.5" r="1.6" /><path d="M11.5 6 V10 H6.5 M8.5 8 L6.5 10 L8.5 12" stroke={BLUE} strokeWidth="1.2" /></Icon>
                Metni Kaydır
              </SmallButton>
            </ToolRow>
            <ToolRow>
              <SmallButton>
                <Icon width="13" height="13" viewBox="0 0 13 13"><path d="M0.5 0.5 H12.5 V12.5 H0.5 Z M4.5 0.5 V3 M8.5 0.5 V3 M4.5 10 V12.5 M8.5 10 V12.5" /><path d="M0.5 3.5 H12.5 V9.5 H0.5 Z" fill="#d4e8f8" stroke={BLUE} /><path d="M2 6.5 H11 M4 4.8 L2.2 6.5 L4 8.2 M9 4.8 L10.8 6.5 L9 8.2" stroke={BLUE} /></Icon>
                <SmallText $mr={3}>Birleştir ve Ortala</SmallText>
                <Chevron />
              </SmallButton>
            </ToolRow>
          </Stack>
        </Group>

        <Group name="Sayı" w={124} pad={5} launcher>
          <Stack $top={7} $gap={7}>
            <SelectBox $w={112}>
              <RibbonSelect aria-label="Sayı biçimi"><option>Genel</option></RibbonSelect>
              <Chevron />
            </SelectBox>
            <ToolRow>
              <Tool $w={18} aria-label="Para birimi">
                <Icon width="14" height="13" viewBox="0 0 14 13"><path d="M6 8.5 H0.5 V1.5 H12.5 V4 M4.5 3.5 C2 3 2 7 4.5 6.5 M7 3.5 V6" /><ellipse cx="9.5" cy="6.5" rx="3" ry="1.4" stroke="#e07a10" fill="#fbd3a4" /><path d="M6.5 6.5 V11 C7 12.5 12 12.5 12.5 11 V6.5 M6.5 9 C7 10 12 10 12.5 9" stroke="#e07a10" /></Icon>
              </Tool>
              <Tool $w={10} aria-label="Para birimi türü"><Chevron /></Tool>
              <Tool $w={24} aria-label="Yüzde">
                <Icon width="13" height="13" viewBox="0 0 13 13" strokeWidth="1.2"><circle cx="3.2" cy="3.8" r="2.2" /><circle cx="9.8" cy="9.2" r="2.2" /><path d="M10 1.5 L3 11.5" /></Icon>
              </Tool>
              <Tool $w={15} aria-label="Binlik">
                <Icon width="8" height="12" viewBox="0 0 8 12"><path d="M4 1 C7.5 1 7.5 8 2 11 C4 8.5 4 7.5 3.6 6.6 C0.6 6.4 0.6 1.2 4 1 Z" fill="currentColor" stroke="none" /></Icon>
              </Tool>
              <Rule $m={4} />
              <Tool $w={16} aria-label="Ondalık artır"><DecimalIcon more /></Tool>
              <Tool $w={22} aria-label="Ondalık azalt"><DecimalIcon /></Tool>
            </ToolRow>
          </Stack>
        </Group>

        <Group name="Stiller" pad={7}>
          <BigButton $w={72}>
            <BigIcon><TableIcon kind="cond" /></BigIcon>
            <BigLine>Koşullu</BigLine>
            <BigLine>Biçimlendirme<Chevron /></BigLine>
          </BigButton>
          <BigButton $w={62}>
            <BigIcon><TableIcon kind="format" /></BigIcon>
            <BigLine>Tablo Olarak</BigLine>
            <BigLine>Biçimlendir<Chevron /></BigLine>
          </BigButton>
          <Gallery>
            <GalleryGrid>
              <StyleCell $fg="#000000" $kind="selected">Normal</StyleCell>
              <StyleCell $fg="#006100" $bg="#c6efce">İyi</StyleCell>
              <StyleCell $fg="#9c0006" $bg="#ffc7ce">Kötü</StyleCell>
              <StyleCell $fg="#9c5700" $bg="#ffeb9c">Nötr</StyleCell>
              <StyleCell $fg="#7f7f7f" $kind="italic">Açıkla...</StyleCell>
              <StyleCell $fg="#fa7d00" $kind="linked">Bağlı H...</StyleCell>
              <StyleCell $fg="#3f3f3f" $bg="#f2f2f2" $kind="output">Çıkış</StyleCell>
              <StyleCell $fg="#3f3f76" $bg="#ffcc99" $kind="input">Giriş</StyleCell>
            </GalleryGrid>
            <GalleryScroll>
              <GalleryStep aria-label="Yukarı"><Arrow d="M0.5 4 L3 1.5 L5.5 4 Z" /></GalleryStep>
              <GalleryStep aria-label="Aşağı"><Chevron /></GalleryStep>
              <GalleryStep aria-label="Diğer">
                <Icon width="7" height="7" viewBox="0 0 7 7"><path d="M1 0.5 H6 M1 3 L3.5 5.5 L6 3 Z" /></Icon>
              </GalleryStep>
            </GalleryScroll>
          </Gallery>
        </Group>

        <Group name="Hücreler" w={113}>
          <BigButton $w={34}>
            <BigIcon><TableIcon kind="insert" /></BigIcon>
            <BigLine>Ekle</BigLine>
            <BigLine><Chevron /></BigLine>
          </BigButton>
          <BigButton $w={34}>
            <BigIcon><TableIcon kind="delete" /></BigIcon>
            <BigLine>Sil</BigLine>
            <BigLine><Chevron /></BigLine>
          </BigButton>
          <BigButton $w={34}>
            <BigIcon><TableIcon kind="cell" /></BigIcon>
            <BigLine>Biçim</BigLine>
            <BigLine><Chevron /></BigLine>
          </BigButton>
        </Group>

        <Group name="Düzenleme" w={219} pad={10}>
          <Stack>
            <SmallButton>
              <Icon width="12" height="12" viewBox="0 0 12 12"><path d="M11 3 V0.8 H1.2 L6.5 6 L1.2 11.2 H11 V9" /></Icon>
              <SmallText $mr={6}>Otomatik Toplam</SmallText>
              <Chevron />
            </SmallButton>
            <SmallButton>
              <Icon width="12" height="12" viewBox="0 0 12 12"><path d="M0.5 0.5 H11.5 V11.5 H0.5 Z M0.5 2.5 H11.5" /><path d="M6 4 V10 M3.5 7.5 L6 10 L8.5 7.5" stroke={BLUE} strokeWidth="1.3" /></Icon>
              Doldur<Chevron />
            </SmallButton>
            <SmallButton>
              <Icon width="12" height="12" viewBox="0 0 12 12"><path d="M7 1 L11 5 L5 11 L1 7 Z" stroke="#a846b4" fill="#ffffff" /><path d="M3.5 4.5 L7.5 8.5 L5 11 L1 7 Z" fill="#c878d0" stroke="#a846b4" /></Icon>
              Temizle<Chevron />
            </SmallButton>
          </Stack>
          <BigButton $w={70}>
            <BigIcon>
              <Icon width="26" height="26" viewBox="0 0 26 26">
                <path d="M2.5 11 L6 2.5 L9.5 11 M3.8 8 H8.2" stroke={BLUE} strokeWidth="1.2" />
                <path d="M3 14 H9 L3 22 H9" strokeWidth="1.2" />
                <path d="M12.5 7 H24.5 V9 L20 14 V19 L17 17 V14 L12.5 9 Z" strokeWidth="1.2" />
              </Icon>
            </BigIcon>
            <BigLine>Sırala ve Filtre</BigLine>
            <BigLine>Uygula<Chevron /></BigLine>
          </BigButton>
          <BigButton $w={28}>
            <BigIcon>
              <Icon width="26" height="26" viewBox="0 0 26 26" strokeWidth="1.2"><circle cx="16" cy="9.5" r="8" /><path d="M10 15 L2 24" /></Icon>
            </BigIcon>
            <BigLine>Bul ve</BigLine>
            <BigLine>Seç<Chevron /></BigLine>
          </BigButton>
        </Group>
        <Collapse aria-label="Şeridi daralt">
          <Icon width="9" height="6" viewBox="0 0 9 6" strokeWidth="1.3"><path d="M1 5 L4.5 1.5 L8 5" /></Icon>
        </Collapse>
      </Ribbon>

      <FormulaRow>
        <Field $w={81}>
          <NameInput aria-label="Ad Kutusu" defaultValue="AN111" />
          <Tool $w={16} aria-label="Adlar"><Arrow d="M0 1.5 H6 L3 4.5 Z" /></Tool>
        </Field>
        <Icon width="24" height="12" viewBox="0 0 24 12"><path d="M12.5 2 V11" stroke="#a0a0a0" strokeWidth="1.5" strokeDasharray="1.5 2" /></Icon>
        <Field $w={88}>
          <Tool $w={29} aria-label="İptal">
            <Icon width="9" height="9" viewBox="0 0 9 9" stroke="#c0c0c0" strokeWidth="1.5"><path d="M1 1 L8 8 M8 1 L1 8" /></Icon>
          </Tool>
          <Tool $w={29} aria-label="Gir">
            <Icon width="11" height="9" viewBox="0 0 11 9" stroke="#c0c0c0" strokeWidth="1.8"><path d="M1 5 L4 8 L10 1" /></Icon>
          </Tool>
          <Tool $w={29}><Fx>fx</Fx></Tool>
        </Field>
        <Field $ml={3}>
          <FormulaInput aria-label="Formül" />
          <Tool $w={12} aria-label="Genişlet"><Chevron /></Tool>
        </Field>
      </FormulaRow>

      <SheetArea>
        <Sheet />
        <VScroll>
          <Step aria-label="Yukarı kaydır"><Arrow d="M0.5 4.5 L3 1.5 L5.5 4.5 Z" /></Step>
          <VThumb />
          <Track />
          <Step aria-label="Aşağı kaydır"><Arrow d="M0.5 1.5 L3 4.5 L5.5 1.5 Z" /></Step>
        </VScroll>
      </SheetArea>

      <SheetBar>
        <SheetNav>
          <Icon width="6" height="8" viewBox="0 0 6 8"><path d="M5 1 V7 L1 4 Z" fill={GREEN} stroke="none" /></Icon>
          <Icon width="6" height="8" viewBox="0 0 6 8"><path d="M1 1 V7 L5 4 Z" fill="#c0c0c0" stroke="none" /></Icon>
          <b>...</b>
        </SheetNav>
        {SHEETS.map((s) => (
          <SheetTab key={s} $active={s === "4-Kirişler"}>{s}</SheetTab>
        ))}
        <AddSheet aria-label="Yeni sayfa">
          <Icon width="13" height="13" viewBox="0 0 13 13"><circle cx="6.5" cy="6.5" r="5.8" /><path d="M6.5 3.5 V9.5 M3.5 6.5 H9.5" strokeWidth="1.6" /></Icon>
        </AddSheet>
        <Icon width="34" height="12" viewBox="0 0 34 12"><path d="M20.5 2 V11" stroke="#a0a0a0" strokeWidth="1.5" strokeDasharray="1.5 2" /></Icon>
        <HScroll>
          <Step aria-label="Sola kaydır"><Arrow d="M4.5 0.5 L1.5 3 L4.5 5.5 Z" /></Step>
          <HThumb />
          <HGap />
          <Step aria-label="Sağa kaydır"><Arrow d="M1.5 0.5 L4.5 3 L1.5 5.5 Z" /></Step>
        </HScroll>
      </SheetBar>

      <StatusBar>
        <StatusItem>Hazır</StatusItem>
        <StatusItem>
          <Icon width="12" height="11" viewBox="0 0 12 11"><path d="M5 9.5 H0.5 V0.5 H11.5 V4 M0.5 2.5 H11.5 M2 5 H4 M2 7 H4" /><circle cx="8" cy="7" r="3" /><circle cx="8" cy="7" r="1" fill="currentColor" /></Icon>
        </StatusItem>
        <StatusItem>
          <Icon width="11" height="12" viewBox="0 0 11 12"><circle cx="4.5" cy="2" r="1.3" /><path d="M0.5 3 L3 4.5 V7 L1.5 11 M8.5 3 L6 4.5 V6 M3 7 L5 7.5 M6 7 L10 11 M10 7 L5 11" /></Icon>
          Erişilebilirlik: Önerilere göz atın
        </StatusItem>
        <StatusTools>
          <ViewButton aria-label="Normal">
            <Icon width="11" height="11" viewBox="0 0 11 11"><path d="M0.5 0.5 H10.5 V10.5 H0.5 Z M3.8 0.5 V10.5 M7.2 0.5 V10.5 M0.5 3.8 H10.5 M0.5 7.2 H10.5" /></Icon>
          </ViewButton>
          <ViewButton aria-label="Sayfa Düzeni">
            <Icon width="12" height="11" viewBox="0 0 12 11"><path d="M0.5 0.5 H11.5 V10.5 H0.5 Z M3 2.5 H9 V8.5 H3 Z M4 4.5 H8 M4 6.5 H8" /></Icon>
          </ViewButton>
          <ViewButton $on aria-label="Sayfa Sonu Önizleme">
            <Icon width="12" height="11" viewBox="0 0 12 11"><path d="M0.5 0.5 H11.5 V10.5 H0.5 Z M0.5 6.5 H8 V0.5 M4 0.5 V6.5" /></Icon>
          </ViewButton>
          <Quick aria-label="Uzaklaştır" $ml={5}>
            <Icon width="7" height="7" viewBox="0 0 7 7"><path d="M0.5 3.5 H6.5" /></Icon>
          </Quick>
          <Zoom type="range" min={0} max={100} defaultValue={55} aria-label="Yakınlaştırma" />
          <Quick aria-label="Yakınlaştır">
            <Icon width="7" height="7" viewBox="0 0 7 7"><path d="M0.5 3.5 H6.5 M3.5 0.5 V6.5" /></Icon>
          </Quick>
          <Percent>%130</Percent>
        </StatusTools>
      </StatusBar>
    </Shell>
  );
}
